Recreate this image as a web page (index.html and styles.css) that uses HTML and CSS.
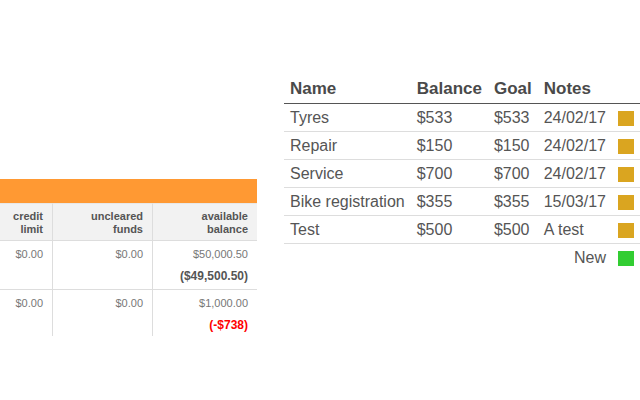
FILE: index.html
```html
<!DOCTYPE html>
<html>
<head>
<meta charset="utf-8">
<link rel="stylesheet" href="styles.css">
</head>
<body>
<div class="page">
  <div class="accounts">
    <div class="accounts-bar"></div>
    <table class="acct-table">
      <colgroup>
        <col class="c-credit">
        <col class="c-uncleared">
        <col class="c-available">
      </colgroup>
      <thead>
        <tr>
          <th>credit<br>limit</th>
          <th>uncleared<br>funds</th>
          <th>available<br>balance</th>
        </tr>
      </thead>
      <tbody>
        <tr>
          <td><div class="amt">$0.00</div></td>
          <td><div class="amt">$0.00</div></td>
          <td><div class="amt">$50,000.50</div><div class="net">($49,500.50)</div></td>
        </tr>
        <tr>
          <td><div class="amt">$0.00</div></td>
          <td><div class="amt">$0.00</div></td>
          <td><div class="amt">$1,000.00</div><div class="net neg">(-$738)</div></td>
        </tr>
      </tbody>
    </table>
  </div>

  <div class="goals">
    <table class="goal-table">
      <thead>
        <tr>
          <th>Name</th>
          <th>Balance</th>
          <th>Goal</th>
          <th>Notes</th>
          <th></th>
        </tr>
      </thead>
      <tbody>
        <tr><td>Tyres</td><td>$533</td><td>$533</td><td>24/02/17</td><td><span class="swatch gold"></span></td></tr>
        <tr><td>Repair</td><td>$150</td><td>$150</td><td>24/02/17</td><td><span class="swatch gold"></span></td></tr>
        <tr><td>Service</td><td>$700</td><td>$700</td><td>24/02/17</td><td><span class="swatch gold"></span></td></tr>
        <tr><td>Bike registration</td><td>$355</td><td>$355</td><td>15/03/17</td><td><span class="swatch gold"></span></td></tr>
        <tr><td>Test</td><td>$500</td><td>$500</td><td>A test</td><td><span class="swatch gold"></span></td></tr>
        <tr class="new-row"><td colspan="4" class="new-label">New</td><td><span class="swatch green"></span></td></tr>
      </tbody>
    </table>
  </div>
</div>
</body>
</html>
```

FILE: styles.css
```css
html, body {
  margin: 0;
  padding: 0;
  background: #fff;
}

body {
  font-family: "Liberation Sans", Arial, sans-serif;
  color: #555;
}

.page {
  display: flex;
  align-items: flex-start;
  width: 640px;
  height: 400px;
  overflow: hidden;
}

/* ---------- left accounts panel ---------- */
.accounts {
  width: 257px;
  height: 157px;
  margin-top: 179px;
  overflow: hidden;
  display: flex;
  flex-direction: column;
  align-items: flex-end;
  flex-shrink: 0;
}

.accounts-bar {
  align-self: stretch;
  height: 24px;
  background: #ff9933;
  flex-shrink: 0;
}

.acct-table {
  flex-shrink: 0;
  width: 305px;
  table-layout: fixed;
  border-collapse: separate;
  border-spacing: 0;
  font-size: 11px;
}

.c-credit { width: 100px; }
.c-uncleared { width: 100px; }
.c-available { width: 105px; }

.acct-table th,
.acct-table td {
  text-align: right;
  padding: 6px 9px 6px 6px;
  border-bottom: 1px solid #dddddd;
  border-left: 1px solid #dddddd;
  vertical-align: top;
}

.acct-table th:first-child,
.acct-table td:first-child {
  border-left: none;
}

.acct-table thead th {
  background: #f2f2f2;
  border-top: 1px solid #e8e8e8;
  font-weight: bold;
  line-height: 13px;
  color: #555;
  padding-bottom: 4px;
}

.acct-table td {
  color: #777;
}

.acct-table .amt {
  line-height: 14px;
}

.acct-table .net {
  margin-top: 8px;
  line-height: 14px;
  font-size: 12px;
  font-weight: bold;
  color: #555;
}

.acct-table .net.neg {
  color: #ff0000;
}

/* ---------- right goals panel ---------- */
.goals {
  margin-left: 27px;
  margin-top: 75px;
  flex-shrink: 0;
}

.goal-table {
  border-collapse: separate;
  border-spacing: 0;
  width: 356px;
}

.goal-table th {
  text-align: left;
  font-size: 17px;
  font-weight: bold;
  line-height: 20px;
  padding: 4px 6px;
  color: #4a4a4a;
  border-bottom: 1px solid #555;
  white-space: nowrap;
}

.goal-table td {
  font-size: 16px;
  line-height: 19px;
  padding: 4px 6px;
  color: #555;
  border-bottom: 1px solid #dddddd;
  white-space: nowrap;
}

.goal-table tr:last-child td {
  border-bottom: none;
}

.goal-table td.new-label {
  text-align: right;
}

.swatch {
  display: inline-block;
  width: 16px;
  height: 15px;
  vertical-align: middle;
}

.swatch.gold { background: #daa520; }
.swatch.green { background: #32cd32; }
```
